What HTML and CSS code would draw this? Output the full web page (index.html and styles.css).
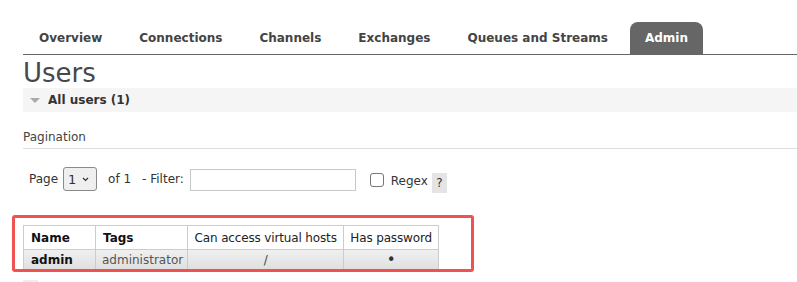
FILE: index.html
```html
<!DOCTYPE html>
<html lang="en">
<head>
    <meta charset="UTF-8">
    <meta name="viewport" content="width=device-width, initial-scale=1.0">
    <title>RabbitMQ Management - Users</title>
    <link rel="stylesheet" href="styles.css">
</head>
<body>

    <!-- Onglets -->
    <ul class="tabs">
        <li><a href="#">Overview</a></li>
        <li><a href="#">Connections</a></li>
        <li><a href="#">Channels</a></li>
        <li><a href="#">Exchanges</a></li>
        <li><a href="#">Queues and Streams</a></li>
        <li class="selected"><a href="#">Admin</a></li>
    </ul>

    <h1>Users</h1>

    <div class="section-header">
        <span class="triangle"></span>
        <span>All users (1)</span>
    </div>

    <div class="pagination-title">Pagination</div>

    <div class="pagination-row">
        <span>Page</span>
        <div class="select-box">
            <span>1</span>
            <svg width="7" height="5" viewBox="0 0 7 5"><path d="M1 1 L3.5 3.5 L6 1" fill="none" stroke="#333" stroke-width="1.2"/></svg>
        </div>
        <span class="of-total">of 1</span>
        <span class="filter-label">- Filter:</span>
        <input type="text" class="filter-input">
        <span class="checkbox"></span>
        <span class="regex-label">Regex</span>
        <span class="help">?</span>
    </div>

    <div class="table-wrap">
        <table class="list">
            <thead>
                <tr>
                    <th class="left col-name">Name</th>
                    <th class="left col-tags">Tags</th>
                    <th class="col-vhosts">Can access virtual hosts</th>
                    <th class="col-pass">Has password</th>
                </tr>
            </thead>
            <tbody>
                <tr>
                    <td class="name">admin</td>
                    <td class="tags">administrator</td>
                    <td class="center">/</td>
                    <td class="center bullet">&bull;</td>
                </tr>
            </tbody>
        </table>
        <div class="highlight"></div>
    </div>

    <div class="next-section"></div>

</body>
</html>
```

FILE: styles.css
```css
body {
    margin: 0;
    padding: 0 0 0 23px;
    font-family: "DejaVu Sans", Verdana, sans-serif;
    font-size: 12px;
    color: #444;
    background-color: white;
}

.tabs {
    display: flex;
    list-style: none;
    margin: 22px 0 0 0;
    padding: 0 0 0 1px;
    border-bottom: 1px solid #666;
}

.tabs li {
    margin-right: 7px;
}

.tabs a {
    display: block;
    height: 32px;
    line-height: 33px;
    padding: 0 15px;
    font-weight: bold;
    color: #444;
    text-decoration: none;
}

.tabs li.selected a {
    background-color: #666;
    color: white;
    border-radius: 8px 8px 0 0;
}

h1 {
    margin: 3px 0 0 0;
    font-size: 26px;
    line-height: 30px;
    font-weight: normal;
    color: #484848;
}

.section-header {
    display: flex;
    align-items: center;
    height: 24px;
    padding-left: 7px;
    background-color: #f5f5f5;
    font-weight: bold;
    color: #333;
}

.triangle {
    width: 0;
    height: 0;
    border-left: 5px solid transparent;
    border-right: 5px solid transparent;
    border-top: 5px solid #aaa;
    margin-right: 8px;
    margin-top: 1px;
}

.pagination-title {
    margin-top: 18px;
    line-height: 15px;
    padding-bottom: 3px;
    border-bottom: 1px solid #ddd;
}

.pagination-row {
    display: flex;
    align-items: center;
    margin-top: 18px;
    padding-left: 6px;
    height: 24px;
    color: #333;
}

.select-box {
    display: flex;
    align-items: center;
    justify-content: space-between;
    box-sizing: border-box;
    width: 34px;
    height: 24px;
    margin-left: 5px;
    padding: 0 7px 0 4px;
    border: 1px solid #8a8a8a;
    border-radius: 3px;
    background-color: #efefef;
    font-size: 13px;
}

.of-total {
    margin-left: 11px;
}

.filter-label {
    margin-left: 11px;
}

.filter-input {
    box-sizing: border-box;
    width: 166px;
    height: 22px;
    margin: 2px 0 0 6px;
    border: 1px solid #c8c8c8;
    padding: 0 4px;
}

.checkbox {
    box-sizing: border-box;
    width: 14px;
    height: 14px;
    margin: 2px 0 0 14px;
    border: 1px solid #767676;
    border-radius: 3px;
    background-color: white;
}

.regex-label {
    margin: 3px 0 0 7px;
}

.help {
    display: inline-block;
    width: 15px;
    height: 20px;
    line-height: 20px;
    margin: 7px 0 0 4px;
    text-align: center;
    background-color: #e4e4e4;
    color: #333;
}

.table-wrap {
    position: relative;
    display: inline-block;
    margin-top: 34px;
}

.list {
    border-collapse: collapse;
}

.list th,
.list td {
    box-sizing: border-box;
    border: 1px solid #ccc;
    padding: 0 4px;
    white-space: nowrap;
}

.list .col-name { width: 72px; }
.list .col-tags { width: 91px; }
.list .col-vhosts { width: 156px; }
.list .col-pass { width: 95px; }

.list th {
    height: 24px;
    font-weight: normal;
    color: #222;
    text-align: center;
    padding-top: 1px;
    letter-spacing: -0.15px;
}

.list th.left {
    text-align: left;
    font-weight: bold;
    color: #111;
    padding-left: 7px;
    letter-spacing: 0;
}

.list tbody tr {
    background: linear-gradient(to bottom, #f0f0f0, #dedede);
}

.list td {
    height: 21px;
    color: #444;
}

.list td.name {
    font-weight: bold;
    color: #111;
    padding-left: 7px;
}

.list td.tags {
    color: #555;
    padding-left: 6px;
}

.list td.center {
    text-align: center;
}

.list td.bullet {
    font-size: 15px;
    line-height: 18px;
    color: #333;
}

/* cadre rouge d'annotation */
.highlight {
    position: absolute;
    left: -11px;
    top: -10px;
    right: -35px;
    bottom: -1px;
    border: 3px solid #f05252;
    border-radius: 3px;
    pointer-events: none;
}

.next-section {
    width: 15px;
    height: 6px;
    margin-top: 6px;
    background-color: #eee;
}
```
